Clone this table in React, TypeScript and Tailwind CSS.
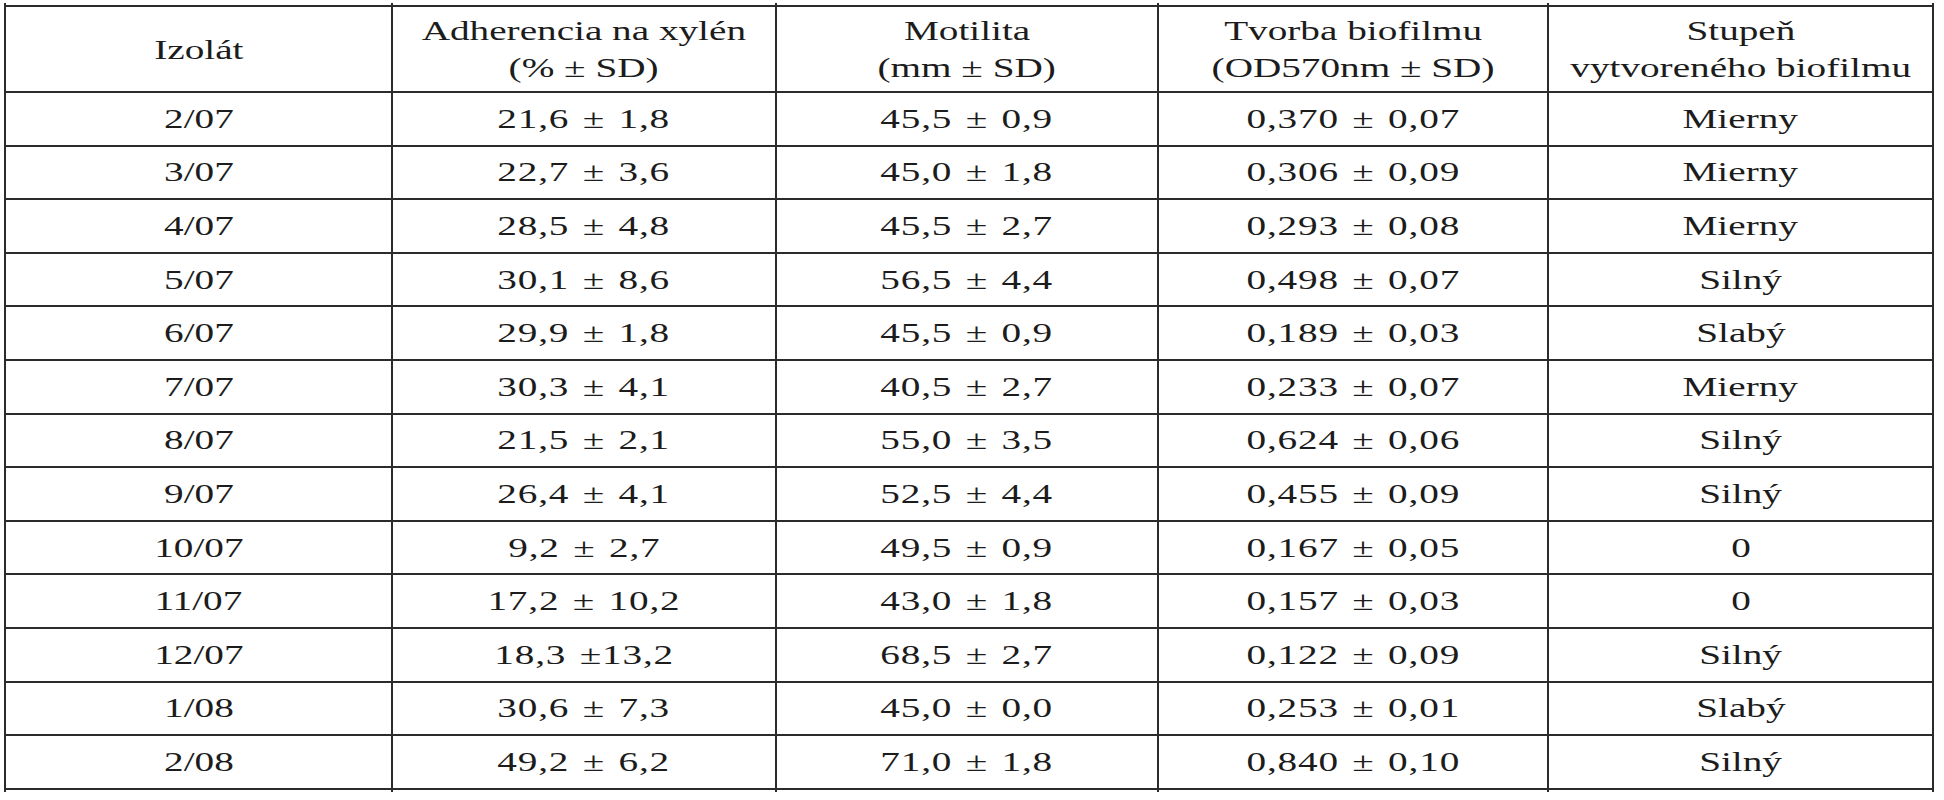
import React from "react";

const rows: string[][] = [
  ["2/07", "21,6 ± 1,8", "45,5 ± 0,9", "0,370 ± 0,07", "Mierny"],
  ["3/07", "22,7 ± 3,6", "45,0 ± 1,8", "0,306 ± 0,09", "Mierny"],
  ["4/07", "28,5 ± 4,8", "45,5 ± 2,7", "0,293 ± 0,08", "Mierny"],
  ["5/07", "30,1 ± 8,6", "56,5 ± 4,4", "0,498 ± 0,07", "Silný"],
  ["6/07", "29,9 ± 1,8", "45,5 ± 0,9", "0,189 ± 0,03", "Slabý"],
  ["7/07", "30,3 ± 4,1", "40,5 ± 2,7", "0,233 ± 0,07", "Mierny"],
  ["8/07", "21,5 ± 2,1", "55,0 ± 3,5", "0,624 ± 0,06", "Silný"],
  ["9/07", "26,4 ± 4,1", "52,5 ± 4,4", "0,455 ± 0,09", "Silný"],
  ["10/07", "9,2 ± 2,7", "49,5 ± 0,9", "0,167 ± 0,05", "0"],
  ["11/07", "17,2 ± 10,2", "43,0 ± 1,8", "0,157 ± 0,03", "0"],
  ["12/07", "18,3 ±13,2", "68,5 ± 2,7", "0,122 ± 0,09", "Silný"],
  ["1/08", "30,6 ± 7,3", "45,0 ± 0,0", "0,253 ± 0,01", "Slabý"],
  ["2/08", "49,2 ± 6,2", "71,0 ± 1,8", "0,840 ± 0,10", "Silný"],
];

const headers: string[][] = [
  ["Izolát"],
  ["Adherencia na xylén", "(% ± SD)"],
  ["Motilita", "(mm ± SD)"],
  ["Tvorba biofilmu", "(OD570nm ± SD)"],
  ["Stupeň", "vytvoreného biofilmu"],
];

const widths = ["w-[387px]", "w-[384px]", "w-[382px]", "w-[390px]", "w-[385px]"];

function Txt({ children, num }: { children: string; num?: boolean }) {
  return (
    <span
      className={`inline-block scale-x-[1.4] whitespace-pre ${num ? "[word-spacing:2px] tracking-[0.6px]" : ""}`}
    >
      {children}
    </span>
  );
}

export default function App() {
  return (
    <div className="w-[1944px] h-[800px] bg-white overflow-hidden pt-[3px] pl-[4px] font-['Liberation_Serif',serif] text-[28px] text-[#1c1c1c]">
      <table className="border-collapse">
        <tbody>
          <tr className="h-[3px]">
            {widths.map((w, i) => (
              <td key={i} className={`${w} p-0 border-x-2 border-[#2b2b2b]`} />
            ))}
          </tr>
          <tr className="h-[86px]">
            {headers.map((h, i) => (
              <th key={i} className="p-0 border-2 border-[#2b2b2b] font-normal text-center align-middle leading-[37px]">
                {h.map((line, j) => (
                  <div key={j}>
                    <Txt>{line}</Txt>
                  </div>
                ))}
              </th>
            ))}
          </tr>
          {rows.map((r, i) => (
            <tr key={i} className="h-[53.6px]">
              {r.map((c, j) => (
                <td key={j} className="p-0 border-2 border-[#2b2b2b] text-center align-middle leading-none">
                  <Txt num={c.includes("±")}>{c}</Txt>
                </td>
              ))}
            </tr>
          ))}
          <tr className="h-[3px]">
            {widths.map((w, i) => (
              <td key={i} className="p-0 border-x-2 border-[#2b2b2b]" />
            ))}
          </tr>
        </tbody>
      </table>
    </div>
  );
}
